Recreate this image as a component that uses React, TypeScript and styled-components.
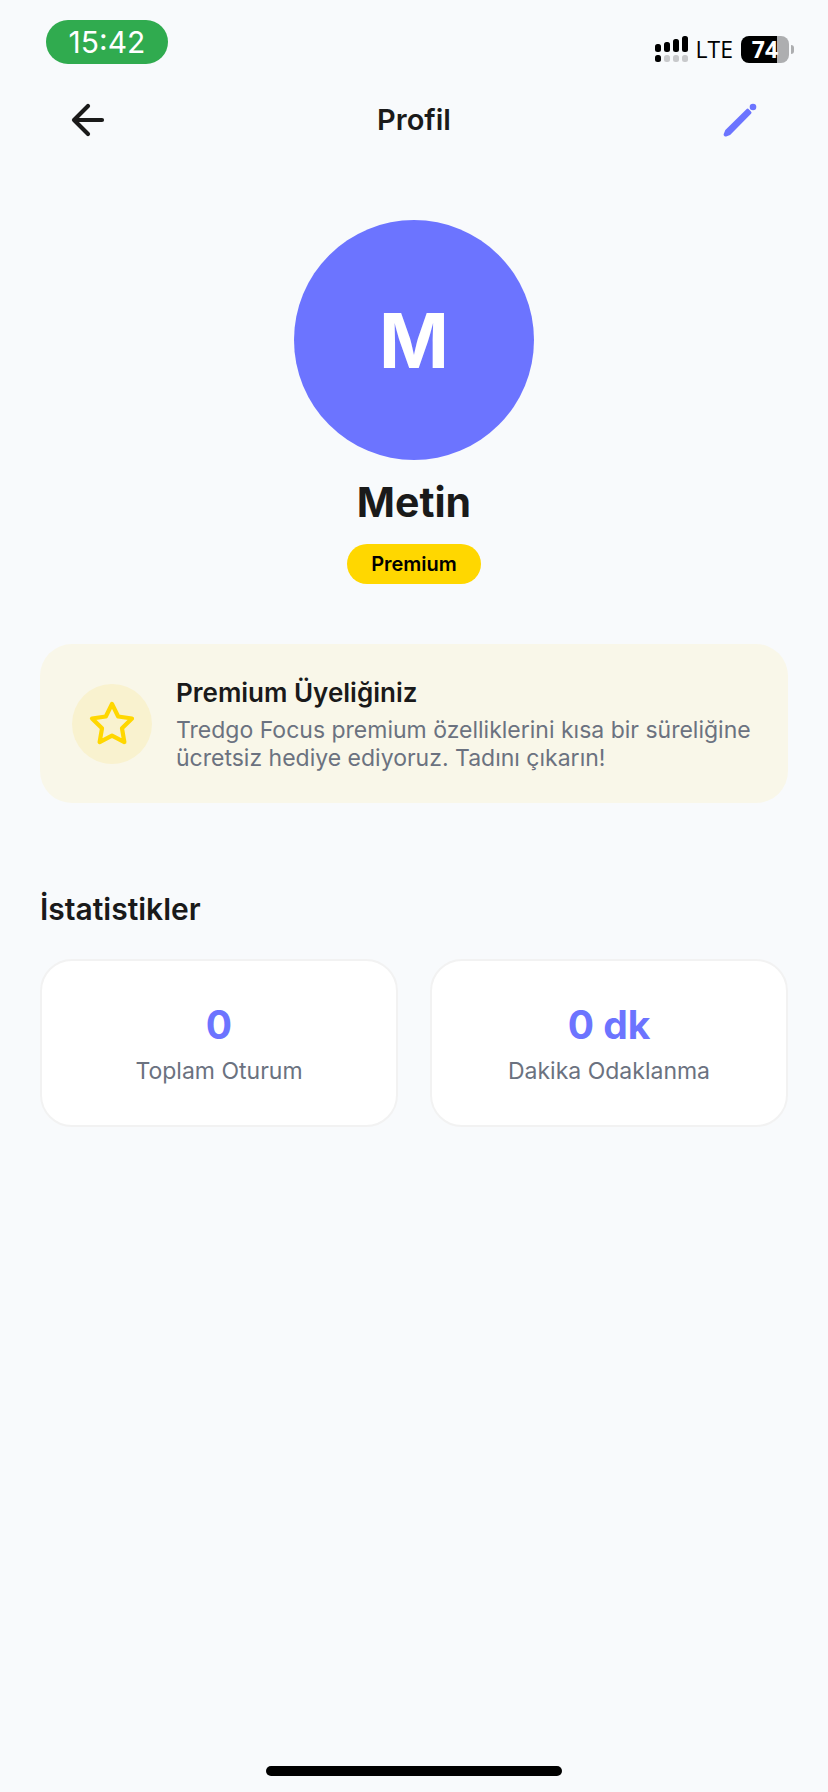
import React from 'react';
import styled, { createGlobalStyle } from 'styled-components';

const GlobalStyle = createGlobalStyle`
  *, *::before, *::after { box-sizing: border-box; }
  body {
    margin: 0;
    background: #f8fafc;
    color: #1a1a1a;
    font-family: Inter, 'Liberation Sans', sans-serif;
  }
  h1, h2, h3, p, dl, dt, dd { margin: 0; }
`;

const Screen = styled.div`
  display: flex;
  flex-direction: column;
  min-height: 100vh;
`;

const StatusBar = styled.div`
  display: flex;
  justify-content: space-between;
  align-items: flex-end;
  padding: 20px 34px 8px 46px;
`;

const Clock = styled.time`
  display: flex;
  align-items: center;
  justify-content: center;
  width: 122px;
  height: 44px;
  border-radius: 22px;
  background: #30ab4f;
  color: #fff;
  font-size: 30px;
`;

const StatusIcons = styled.div`
  display: flex;
  align-items: center;
  gap: 8px;
  height: 29px;
`;

const Carrier = styled.span`
  color: #000;
  font-family: 'Open Sans', sans-serif;
  font-size: 23px;
  font-weight: 500;
  line-height: 27px;
`;

const Battery = styled.div`
  display: flex;
  align-items: center;
  gap: 2px;
`;

const BatteryBody = styled.div`
  display: flex;
  align-items: center;
  justify-content: center;
  width: 48px;
  height: 27px;
  border-radius: 8px;
  background: linear-gradient(90deg, #000 75%, #adaeb0 75%);
  color: #fff;
  font-family: 'Open Sans', sans-serif;
  font-size: 23px;
  font-weight: 700;
  line-height: 27px;
`;

const BatteryTip = styled.div`
  width: 3px;
  height: 9px;
  border-radius: 0 4px 4px 0;
  background: #adaeb0;
`;

const Header = styled.header`
  display: flex;
  align-items: center;
  justify-content: space-between;
  height: 96px;
  padding: 0 64px;
`;

const IconButton = styled.button`
  display: flex;
  width: 48px;
  height: 48px;
  padding: 0;
  border: 0;
  background: none;
  color: inherit;
  cursor: pointer;
`;

const Title = styled.h1`
  font-size: 29px;
  font-weight: 600;
  line-height: 36px;
`;

const Content = styled.main`
  display: flex;
  flex-direction: column;
  padding: 52px 40px 0;
`;

const Identity = styled.section`
  display: flex;
  flex-direction: column;
  align-items: center;
  gap: 16px;
`;

const Avatar = styled.div`
  display: flex;
  align-items: center;
  justify-content: center;
  width: 240px;
  height: 240px;
  border-radius: 50%;
  background: #6c74ff;
  color: #fff;
  font-size: 75px;
  font-weight: 700;
`;

const Name = styled.h2`
  font-size: 41px;
  font-weight: 700;
  line-height: 52px;
`;

const Badge = styled.span`
  padding: 0 24px;
  border-radius: 20px;
  background: #ffd700;
  color: #000;
  font-size: 20px;
  font-weight: 600;
  line-height: 40px;
`;

const PremiumCard = styled.section`
  display: flex;
  align-items: center;
  gap: 24px;
  margin-top: 60px;
  padding: 32px 32px 31px;
  border-radius: 32px;
  background: #f9f7e9;
`;

const StarCircle = styled.div`
  display: flex;
  flex: none;
  align-items: center;
  justify-content: center;
  width: 80px;
  height: 80px;
  border-radius: 50%;
  background: #f9f2cf;
`;

const PremiumText = styled.div`
  display: flex;
  flex: 1;
  flex-direction: column;
  gap: 6px;
`;

const PremiumTitle = styled.h3`
  font-size: 26px;
  font-weight: 600;
  line-height: 34px;
`;

const PremiumNote = styled.p`
  color: #6b7280;
  font-size: 23px;
  line-height: 28px;
`;

const SectionTitle = styled.h2`
  margin-top: 88px;
  font-size: 30px;
  font-weight: 600;
  line-height: 36px;
`;

const Stats = styled.dl`
  display: grid;
  grid-template-columns: 1fr 1fr;
  gap: 32px;
  padding-top: 32px;
`;

const StatCard = styled.div`
  display: flex;
  flex-direction: column-reverse;
  align-items: center;
  gap: 8px;
  padding: 40px 24px;
  border: 2px solid #f2f2f2;
  border-radius: 32px;
  background: #fff;
`;

const StatValue = styled.dd`
  color: #6c74ff;
  font-size: 39px;
  font-weight: 700;
  line-height: 48px;
`;

const StatLabel = styled.dt`
  color: #6b7280;
  font-size: 23px;
  line-height: 28px;
`;

const HomeIndicator = styled.div`
  align-self: center;
  width: 296px;
  height: 10px;
  margin: auto 0 16px;
  border-radius: 5px;
  background: #000;
`;

const SignalIcon = () => (
  <svg width="33" height="27" viewBox="0 0 33 27" aria-hidden="true">
    <rect x="0" y="8" width="6" height="8" rx="2.5" />
    <rect x="9" y="6" width="6" height="10" rx="2.5" />
    <rect x="18" y="3" width="6" height="13" rx="2.5" />
    <rect x="27" y="0" width="6" height="16" rx="2.5" />
    <rect x="0" y="19" width="6" height="7" rx="2.5" />
    <g fill="#c8c9cb">
      <rect x="9" y="19" width="6" height="7" rx="2.5" />
      <rect x="18" y="19" width="6" height="7" rx="2.5" />
      <rect x="27" y="19" width="6" height="7" rx="2.5" />
    </g>
  </svg>
);

const BackIcon = () => (
  <svg width="48" height="48" viewBox="0 0 24 24" fill="none" stroke="#1a1a1a" strokeWidth="2.1" strokeLinecap="round" strokeLinejoin="round" aria-hidden="true">
    <path d="M19 12H5M12 19l-7-7 7-7" />
  </svg>
);

const PencilIcon = () => (
  <svg width="48" height="48" viewBox="0 0 48 48" fill="#6c74ff" aria-hidden="true">
    <path
      d="M31.6 14.4 33.8 16.6 13.4 37.4 9.6 38.9 9.3 38.6 10.8 34.9z"
      stroke="#6c74ff"
      strokeWidth="3.4"
      strokeLinejoin="round"
    />
    <circle cx="37" cy="11" r="3.3" />
  </svg>
);

const StarIcon = () => (
  <svg width="48" height="48" viewBox="0 0 24 24" fill="none" stroke="#ffd700" strokeWidth="2.1" strokeLinejoin="round" aria-hidden="true">
    <path d="m12 2 3.09 6.26L22 9.27l-5 4.87 1.18 6.88L12 17.77l-6.18 3.25L7 14.14 2 9.27l6.91-1.01z" />
  </svg>
);

const stats = [
  { value: '0', label: 'Toplam Oturum' },
  { value: '0 dk', label: 'Dakika Odaklanma' },
];

export default function App() {
  return (
    <Screen>
      <GlobalStyle />
      <StatusBar>
        <Clock>15:42</Clock>
        <StatusIcons>
          <SignalIcon />
          <Carrier>LTE</Carrier>
          <Battery>
            <BatteryBody>74</BatteryBody>
            <BatteryTip />
          </Battery>
        </StatusIcons>
      </StatusBar>
      <Header>
        <IconButton type="button" aria-label="Geri">
          <BackIcon />
        </IconButton>
        <Title>Profil</Title>
        <IconButton type="button" aria-label="Düzenle">
          <PencilIcon />
        </IconButton>
      </Header>
      <Content>
        <Identity>
          <Avatar>M</Avatar>
          <Name>Metin</Name>
          <Badge>Premium</Badge>
        </Identity>
        <PremiumCard>
          <StarCircle>
            <StarIcon />
          </StarCircle>
          <PremiumText>
            <PremiumTitle>Premium Üyeliğiniz</PremiumTitle>
            <PremiumNote>
              Tredgo Focus premium özelliklerini kısa bir süreliğine ücretsiz hediye ediyoruz. Tadını çıkarın!
            </PremiumNote>
          </PremiumText>
        </PremiumCard>
        <SectionTitle>İstatistikler</SectionTitle>
        <Stats>
          {stats.map((stat) => (
            <StatCard key={stat.label}>
              <StatLabel>{stat.label}</StatLabel>
              <StatValue>{stat.value}</StatValue>
            </StatCard>
          ))}
        </Stats>
      </Content>
      <HomeIndicator />
    </Screen>
  );
}
